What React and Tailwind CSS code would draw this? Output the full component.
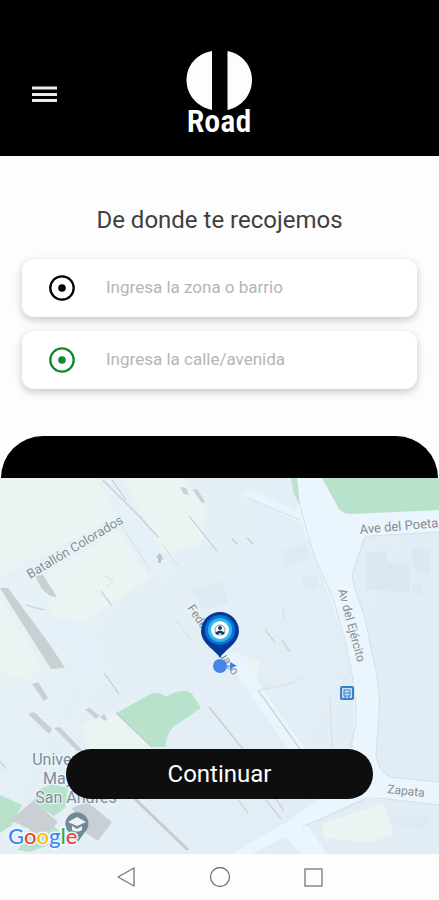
import { useState } from "react";

const GOOGLE_LETTERS = [
  ["G", "#4285f4"],
  ["o", "#ea4335"],
  ["o", "#fbbc05"],
  ["g", "#4285f4"],
  ["l", "#34a853"],
  ["e", "#ea4335"],
];

function RoadLogo() {
  return (
    <svg viewBox="0 0 70 90" className="w-[70px] h-[90px] overflow-visible" role="img" aria-label="Road">
      <g fill="#fdfdfd">
        <path d="M27 3C11 6 1.500 18 1.500 32s9.500 26.500 25.500 30Z" />
        <path d="M42.500 3c15 3 24.500 15 24.500 29s-9.500 26.500-24.500 30Z" />
        <text
          x="34"
          y="84"
          textAnchor="middle"
          fontSize="32"
          fontWeight="600"
          fontFamily="'Roboto Condensed', 'Liberation Sans Narrow', sans-serif"
          stroke="#000"
          strokeWidth="2"
          paintOrder="stroke"
        >
          Road
        </text>
      </g>
    </svg>
  );
}

function AddressField({ id, label, color, value, onChange }) {
  return (
    <label
      htmlFor={id}
      className="flex items-center h-[58px] pl-[26px] pr-4 bg-white rounded-xl shadow-[0_3px_8px_rgba(0,0,0,0.22)]"
    >
      <svg viewBox="0 0 28 28" className={`w-7 h-7 shrink-0 ${color}`} aria-hidden="true">
        <circle cx="14" cy="14" r="11.700" fill="none" stroke="currentColor" strokeWidth="2.300" />
        <circle cx="14" cy="14" r="3.800" fill="currentColor" />
      </svg>
      <input
        id={id}
        type="text"
        aria-label={label}
        placeholder={label}
        value={value}
        onChange={(e) => onChange(e.target.value)}
        className="flex-1 min-w-0 ml-[30px] text-[17px] text-neutral-800 placeholder-[#b5b5b5] bg-transparent focus:outline-none"
      />
    </label>
  );
}

function StreetMap() {
  return (
    <svg
      viewBox="0 0 439 376"
      preserveAspectRatio="xMidYMid slice"
      className="absolute inset-0 w-full h-full"
      fontFamily="Roboto, sans-serif"
    >
      <defs>
        <linearGradient id="land" x1="0" y1="0" x2="1" y2="0.400">
          <stop offset="0" stopColor="#e7f3f5" />
          <stop offset="0.550" stopColor="#e3eef6" />
          <stop offset="1" stopColor="#e1ecf5" />
        </linearGradient>
      </defs>
      <rect width="439" height="376" fill="url(#land)" />

      {/* Blocks */}
      <g fill="#e9f4f3">
        <path d="M0 0h96l22 40L0 98Z" />
        <path d="M42 100 118 52l32 48-62 42-34 4Z" />
        <path d="M122 0h60l24 30-4 36-40 10Z" />
        <path d="M0 118l42 72-14 12-28-8Z" />
        <path d="M82 245l35-12 38 38H86Z" />
        <path d="M240 176l20 8-4 18-12 4Z" />
        <path d="M322 345l62-20 10 32-26 8-44-5Z" />
      </g>
      <g fill="#dde7ef">
        <path d="M366 76l20-4 2 12 22 4v26l-44-2Z" />
        <path d="M412 70l18 2v24l-16-4ZM412 104l10 2v10l-10-2Z" />
      </g>
      <g fill="#dfe9f1">
        <path d="M283 72l22-6 6 14-26 8ZM303 98h14v12h-14Z" />
        <path d="M192 112l30-8 6 20-24 8Z" />
        <path d="M390 336l40 4v12l-38-6Z" />
      </g>

      {/* Roads */}
      <g fill="none" stroke="#e6f0f9" strokeLinecap="round">
        <path d="M106-6l58 98" strokeWidth="15" />
        <path d="M44 152h22l22 22 8 24" strokeWidth="24" strokeLinejoin="round" />
        <path d="M0 104 120 40" strokeWidth="7" />
        <path d="M96 200l-30 62" strokeWidth="6" />
      </g>
      <g fill="none" stroke="#e9f4fc" strokeLinecap="round">
        <path d="M234 180l30 45 36 50 30 44" strokeWidth="14" />
        <path d="M248 16l58 26" strokeWidth="9" />
      </g>
      <path
        d="M297 0h25l17 31q4 5 13 5l87-4v22l-75 5-12 38q3 18 12 39l9 43q8 30 6 58l-3 40q3 18 15 22l48 5v23l-60-7-14-1-58 28 20 29h-26l-15-17-35 17h-20l58-33 58-42q7-18 7-55 0-50-12-91l-22-62-14-35-9-28Z"
        fill="#eaf5fd"
      />
      <path
        d="M300 28l6 22 9 30 18 40 12 42q12 50 11 84l-6 24M439 54l-69 4q-6 1-7 6l-11 33q3 18 12 39l9 43q8 30 6 58l-3 40q3 18 15 22l48 5M379 320l60 7M302 349l64-28M248 20l52 22"
        fill="none"
        stroke="#d3dee5"
      />

      {/* Parks */}
      <g fill="#b9e2cd">
        <path d="M322 0h117v32l-87 4q-9 0-13-5Z" />
        <path d="M291 0h6l3 28-6-12Z" />
        <path d="M116 235l33-18q8-5 17 2 10-7 19-6 7 1 9 6l7 11-28 19q-6 7-8 20h-14Z" />
        <path d="M0 317l22 10-10 20-12 8ZM40 311l12-5 16 4-3 20-11 8-22-13ZM30 352l24-4 12 12-36 14-12-2Z" />
      </g>

      {/* Buildings and walls */}
      <g fill="#c9cfd2">
        <path d="M0 110h8l40 54 17 26-14 1Z" />
        <path d="M35 98l8-1 14 22-7-1-8-7Z" />
        <path d="M32 206l6-2 10 16-4 3ZM28 236l6-2 18 17-3 5ZM54 250l6-1 23 24h-6ZM85 231l5-1 9 8-3 3ZM100 239l4-3 3 5-2 2Z" />
        <path d="M10 342l23-19 25 21-14 14ZM72 330l15-6 25 20-14 19-12-8Z" />
        <path d="M180 9l6 1 3 7-5-1ZM193 12l4-1 8 13-3 1Z" />
      </g>
      <g fill="none" stroke="#c3ccd2" strokeWidth="1.200">
        <path d="M103 2l38 38 17 19M112 2l14 20M189 38l28 35M101 113l11 15M26 127l18 5M104 195l15 21M116 235l36 34M209 229l34 42M258 212l42 59M275 319l9 14M265 151l10 14M282 162l8 12" />
        <path d="M134 320l54 52" strokeWidth="3" />
        <path d="M232 61l5 5M247 60l6 6M238 322l10 13M266 322l15 19M0 283l6 8" />
      </g>
      <g fill="none" stroke="#d6dfe5">
        <path d="M122 48l28 44M105 98l8 5-6 6M260 212l33-7 8-6M330 220l2 50M162 66l17 23M176 142l17 23M283 128l1 13" />
      </g>
      <path d="M160 75l4 7-3-1v4h-3v-5l-2-1Z" fill="#b9c4d3" />

      {/* Bus stop */}
      <g>
        <rect x="340" y="208" width="14" height="14" rx="2" fill="#397fc9" />
        <rect x="342" y="210" width="10" height="10" rx="1" fill="#c5def4" />
        <path d="M344 212h6v6h-6ZM344 215h6M345 218v2M349 218v2" fill="none" stroke="#397fc9" />
      </g>

      {/* Street names */}
      <g fill="#858d92" stroke="#eef5fa" strokeWidth="2" paintOrder="stroke" fontSize="13">
        <text transform="translate(30 101) rotate(-31)">Batallón Colorados</text>
        <text transform="translate(360 56) rotate(-5)">Ave del Poeta</text>
        <text transform="translate(338 112) rotate(75)" fontSize="12">
          Av del Ejército
        </text>
        <text transform="translate(387 315) rotate(6)" fontSize="12">
          Zapata
        </text>
        <text transform="translate(187 130) rotate(56)" fontSize="12">
          Federico Zuazo
        </text>
      </g>
      <g fill="#7b8c97" stroke="#eef5fa" strokeWidth="2" paintOrder="stroke" fontSize="16" textAnchor="middle">
        <text x="74" y="287">Universidad</text>
        <text x="76" y="306">Mayor de</text>
        <text x="76" y="325">San Andrés</text>
      </g>

      {/* University pin */}
      <path d="M77 365l-7-10a11.500 11.500 0 1 1 15-1Z" fill="#718a98" />
      <path d="M68 344l9-5 9 5-9 4ZM72 348l5 3 5-3v4q-5 3-10 0Z" fill="#edf3f6" />

      {/* Pickup pin */}
      <circle cx="220" cy="188" r="7" fill="#4585e8" />
      <path d="M230 184l7 4-4 1-3 4Z" fill="#3f7fe4" />
      <path d="M220 180c-3-7-19-14-19-27a19 19 0 0 1 38 0c0 13-16 20-19 27Z" fill="#063a94" />
      <circle cx="220" cy="152" r="15" fill="#0875d5" />
      <circle cx="220" cy="152" r="12" fill="#2fb8ec" />
      <circle cx="220" cy="152" r="9" fill="#fff" />
      <circle cx="220" cy="152" r="5" fill="none" stroke="#7f93a6" />
      <circle cx="220" cy="150" r="2" fill="#173967" />
      <path d="M215 155q5-5 10 0l-2 2-3-2-3 2Z" fill="#173967" />
    </svg>
  );
}

export default function App() {
  const [zone, setZone] = useState("");
  const [street, setStreet] = useState("");

  return (
    <div className="min-h-screen flex flex-col bg-[#fdfdfd] font-[Roboto,sans-serif]">
      {/* Header */}
      <header className="grid grid-cols-3 items-center bg-black px-8 pt-12 pb-[18px]">
        <button type="button" aria-label="Menú" className="justify-self-start py-2">
          <svg viewBox="0 0 25 17" className="w-[25px] h-[17px]" aria-hidden="true">
            <path d="M0 3h25M0 9.500h25M0 15.500h25" stroke="#ececec" strokeWidth="3" />
          </svg>
        </button>
        <div className="justify-self-center">
          <RoadLogo />
        </div>
      </header>

      {/* Pickup form */}
      <main className="flex-1 flex flex-col">
        <h1 className="pt-12 text-center text-2xl leading-8 text-[#3f3f3f]">
          De donde te recojemos
        </h1>
        <form id="pickup" className="flex flex-col gap-[14px] px-[22px] pt-[23px] pb-[47px]">
          <AddressField
            id="zone"
            label="Ingresa la zona o barrio"
            color="text-black"
            value={zone}
            onChange={setZone}
          />
          <AddressField
            id="street"
            label="Ingresa la calle/avenida"
            color="text-[#118a2c]"
            value={street}
            onChange={setStreet}
          />
        </form>

        <div className="h-[42px] mx-px bg-black rounded-t-[44px]" />

        {/* Map */}
        <section className="relative flex-1 min-h-[376px] flex flex-col justify-end items-center pb-[55px] overflow-hidden">
          <StreetMap />
          <button
            type="button"
            className="relative w-[70%] h-[50px] rounded-full bg-[#0e0e0e] text-white text-2xl"
          >
            Continuar
          </button>
          <div className="absolute left-2 bottom-1 text-[22px] leading-7 font-medium font-[Lato,sans-serif] [-webkit-text-stroke:3px_#f4fafd] [paint-order:stroke]">
            {GOOGLE_LETTERS.map(([letter, color], i) => (
              <span key={i} style={{ color }}>
                {letter}
              </span>
            ))}
          </div>
        </section>
      </main>

      {/* System navigation */}
      <nav className="flex justify-center items-center gap-[70px] h-[46px] bg-[#fdfdfd] text-[#777]">
        <button type="button" aria-label="Atrás">
          <svg viewBox="0 0 24 24" className="w-6 h-6" fill="none" stroke="currentColor" strokeWidth="1.300">
            <path d="M20 3v18L4 12Z" strokeLinejoin="round" />
          </svg>
        </button>
        <button type="button" aria-label="Inicio">
          <svg viewBox="0 0 24 24" className="w-6 h-6" fill="none" stroke="currentColor" strokeWidth="1.300">
            <circle cx="12" cy="12" r="9.500" />
          </svg>
        </button>
        <button type="button" aria-label="Recientes">
          <svg viewBox="0 0 24 24" className="w-6 h-6" fill="none" stroke="currentColor" strokeWidth="1.300">
            <rect x="3" y="4" width="17" height="17" />
          </svg>
        </button>
      </nav>
    </div>
  );
}
